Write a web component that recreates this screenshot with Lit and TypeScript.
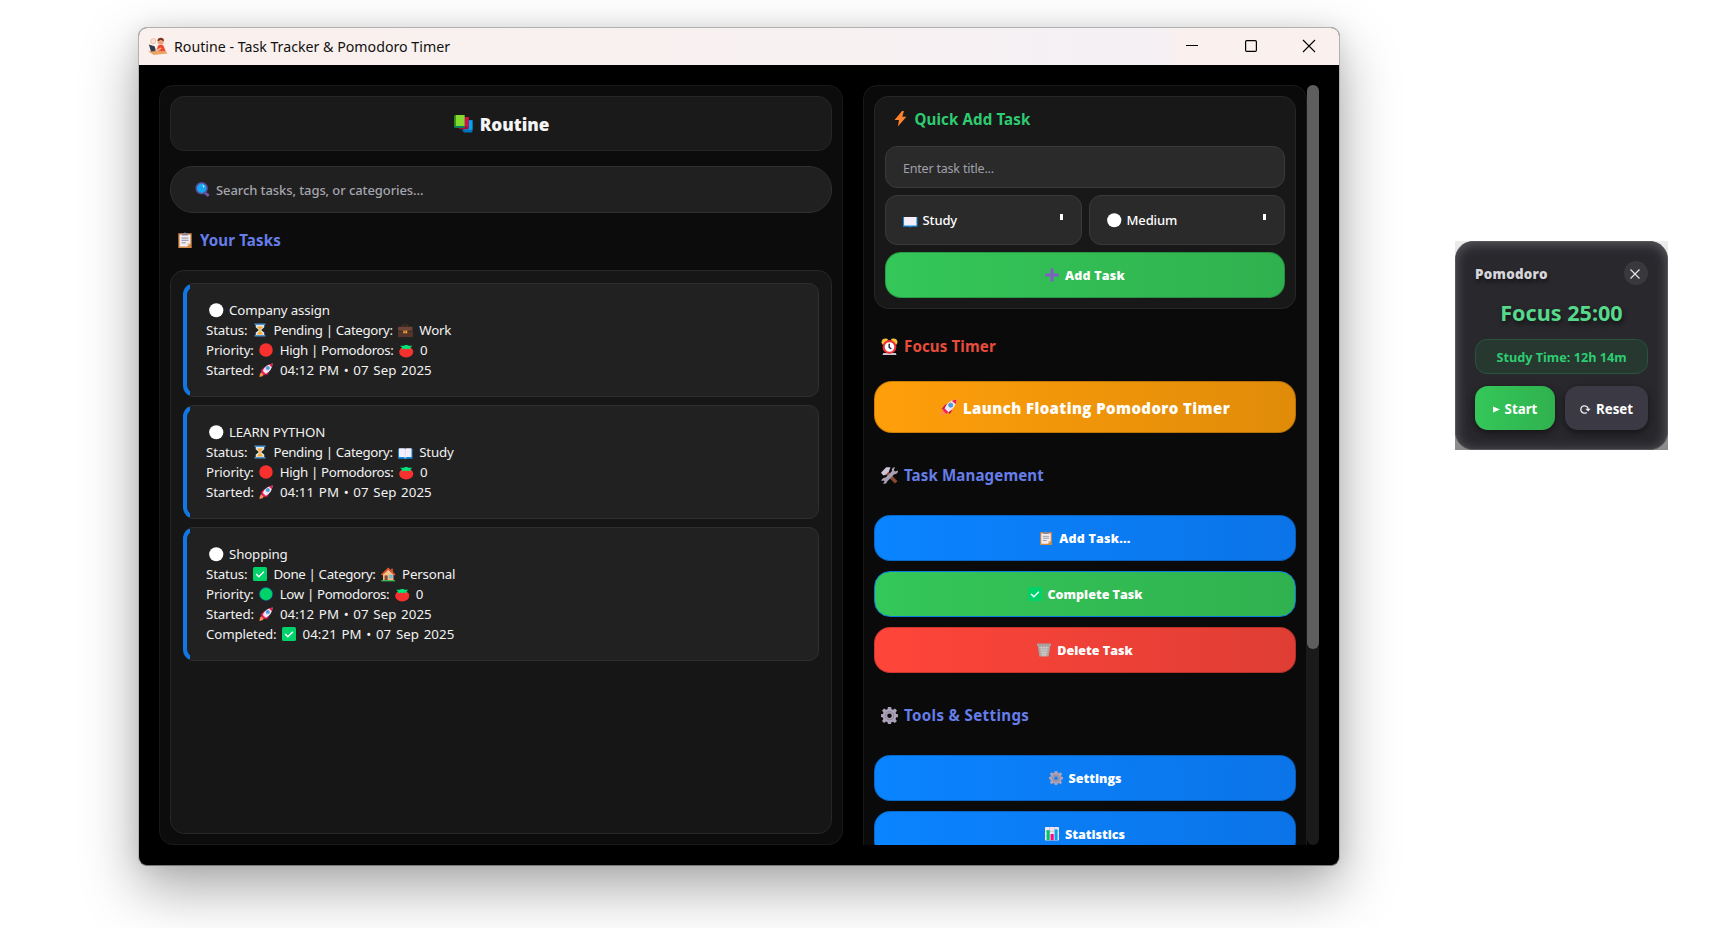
import { LitElement, html, css, svg, nothing } from "lit";
import { customElement, property } from "lit/decorators.js";

const icons: Record<string, unknown> = {
  app: svg`<circle cx="5" cy="4" r="2.4" fill="#fbe3d6" stroke="#e8b496" stroke-width=".8"/><circle cx="12" cy="4.2" r="3" fill="#e9a27b"/><path d="M9 3.6c0-4 6.200-4 6.200 0-2 .4-2-1-3-1S11 4 9 3.600z" fill="#7a2b1c"/><path d="M8 13l1.500-5q3-1.500 5 0L17 14H8z" fill="#ef4a2e"/><path d="M0 13.500h17l1.500 2.200-13 1.300z" fill="#eda363"/><path d="M.8 7l5.400 1.800 1.600 4.700-5 .2z" fill="#333b49"/><path d="M6 13l6-3 1 1-4 3z" fill="#f4b48d"/>`,
  books: svg`<path d="M9 5h8.500v10.500q0 1-1 1H9.500L8 15z" fill="#0072bc"/><path d="M10 5h7.500v9H10z" fill="#00a4ef"/><path d="M5 2h9v10.500q0 1-1 1H5.500L4 12z" fill="#a50f3c"/><path d="M6 2h8v9H6z" fill="#d40f4e"/><path d="M0 1.500Q0 0 1.500 0H10v12H1q-1 0-1-1z" fill="#2c8c10"/><path d="M1.800 0H10v10.500H1.800z" fill="#86d72f"/><path d="M.5 10.500H10V12H1z" fill="#00806a"/>`,
  search: svg`<path d="M11 10.500l6.500 4.500-2 3L9 12.500z" fill="#6b57a5"/><circle cx="8" cy="7.500" r="6.600" fill="#14a7f2" stroke="#5c4b93" stroke-width="1.800"/><path d="M8.500 3l3 2-1 1.500z" fill="#fff"/>`,
  clipboard: svg`<path d="M1.500 1.500h15v16.500h-15z" fill="#d28a44"/><path d="M3 3.200h12v9.500l-3.500 3.600H3z" fill="#f4eff7"/><path d="M11.500 16.300l.2-3.800H15z" fill="#f2c79d"/><path d="M5.500 3.900V1.300h1.800Q9-.3 10.700 1.300h1.800v2.600z" fill="#8d8794"/><path d="M5 6.800h8M5 9.300h8M5 12.200h5" stroke="#8d8794" stroke-width="1.100"/>`,
  white: svg`<circle cx="9" cy="9" r="8.800" fill="#fff"/>`,
  red: svg`<circle cx="9" cy="9" r="8.700" fill="#f8312f"/>`,
  green: svg`<circle cx="9" cy="9" r="8.400" fill="#00d26a" stroke="#0a52b5" stroke-width=".7"/>`,
  hourglass: svg`<path d="M3.500 2.500h11v3L10.500 9l4 3.500v3h-11v-3l4-3.500-4-3.500z" fill="#d9e8f7"/><path d="M5 4.500h8L9 9zM9 9l4 5.800H5z" fill="#ffa51f"/><path d="M8.300 7h1.400v6H8.300z" fill="#ffc53d"/><path d="M2 .5h14v2.200H2zM2 15.300h14v2.200H2z" fill="#4a92ce"/>`,
  briefcase: svg`<path d="M6 5V2.500h6V5" fill="none" stroke="#4b3028" stroke-width="1.400"/><rect x="0" y="4.500" width="18" height="13" rx="1" fill="#6d4534"/><path d="M0 10h18v7.500H0z" fill="#54352b"/><path d="M0 9.500l9 1.500 9-1.500" stroke="#382521" fill="none"/><path d="M6.500 9.500h5v3.200h-5z" fill="#f3a134"/><path d="M8 10.800h2" stroke="#70421c"/>`,
  tomato: svg`<ellipse cx="9" cy="11" rx="8.800" ry="6.900" fill="#f8312f"/><path d="M1.500 3.500H6L8 2.500h2l2 1h4.500L14 5.800l.5 2.200-3.200-1.300L9 7.800 6.800 6.700 3.700 8l.3-2.200z" fill="#00e57a"/>`,
  rocket: svg`<path d="M3 9Q5 5 9 5l-3 6-4.500-.5zM12.500 9q1 4-2.500 7l-2.500-4z" fill="#cb1750"/><path d="M4.500 10.500Q7.500 2 17.500 .5 17 9.500 8 14.500z" fill="#efe9f6"/><path d="M12.500 1.800L17.500.5 16.600 5.500z" fill="#ee1650"/><circle cx="11.300" cy="6.500" r="2.300" fill="#39a5ec" stroke="#77798c" stroke-width=".6"/><path d="M4.500 9.500l4.500 4.500-2.500 1.600L2.800 12z" fill="#f3205a"/><path d="M2.800 12l3.200 3.200-1.500 1.800-4 1L1.200 14z" fill="#ff8a4a"/>`,
  book: svg`<path d="M0 4.700h18V17h-7q-2 1.300-4 0H0z" fill="#1489d6"/><path d="M1.300 4h6.400L9 4.700 10.300 4h6.400v11h-6L9 15.800 7.300 15h-6z" fill="#f5effc"/><path d="M9 5v10.500" stroke="#e0d5ea" stroke-width="1"/>`,
  shutBook: svg`<path d="M0 5h18v12h-7q-2 1.300-4 0H0z" fill="#1489d6"/><path d="M1.300 5h15.400v10.500H1.300z" fill="#f5effc"/>`,
  check: svg`<rect x="0" y="0" width="18" height="18" rx="2" fill="#00d26a"/><path d="M4 9l3.500 3.500L14 6" fill="none" stroke="#fff" stroke-width="1.900"/>`,
  house: svg`<path d="M2.500 8h13v9h-13z" fill="#f6b878"/><path d="M12.500 2h2.500v5h-2.500z" fill="#b2543b"/><path d="M9 3L2.500 9.500h13z" fill="#f6c78b"/><path d="M9 .5L0 9.300l1.300 1.200L9 3.400l7.700 7.100L18 9.300z" fill="#ee5533"/><path d="M4.500 10.500h3.800V17H4.500z" fill="#84493c"/><path d="M10.300 9.500h4v4.500h-4z" fill="#66b9ee"/><path d="M.5 16.300h17v1.500H.5z" fill="#38c45d"/>`,
  bolt: svg`<path d="M10.500 0L1.800 10.500h5.200L5.600 18l10-11.200h-4.800L12.700 0z" fill="#ff822d"/>`,
  plus: svg`<path d="M7 .5h4V7h6.700v4H11v6.500H7V11H.3V7H7z" fill="#7f5fc4"/>`,
  alarm: svg`<path d="M.5 5q0-4.500 4.500-4.500 2 0 2.500 1.500L2 7.500zM17.500 5q0-4.500-4.500-4.500-2 0-2.500 1.500L16 7.500z" fill="#f7c23b"/><path d="M2.500 16h13l1 2h-15z" fill="#cfc8d6"/><circle cx="9" cy="9.500" r="6.200" fill="#fff" stroke="#ee3035" stroke-width="2.200"/><path d="M8.700 6v4l2.300 1.600" fill="none" stroke="#342b48" stroke-width="1.600"/>`,
  tools: svg`<path d="M4 7l3-3 10.500 11-2.800 2.500z" fill="#884a38"/><path d="M0 6L5.500.3H10L8.500 4.500 5 8.300 2.500 9z" fill="#cfc3d7"/><path d="M14.800.3l-1.300 3.200 1.500 1.300 3-1q0 4-4 4l-7.500 7.500q-.5 3.200-4.500 2.200l1.900-2-1-1.300-2.600.6Q1 11 5 11l6.500-6.500Q11 .3 14.800.3z" fill="#aaa0b5"/>`,
  trash: svg`<path d="M0 .8h18v2.700h-1L15 17.500H3L1 3.500H0z" fill="#aaa19f"/><path d="M3 6h12M3.300 9h11.400M4 12h10M4.500 15h9M5.500 4l2 13M9 4v13M12.500 4l-2 13" stroke="#d0cac8" stroke-width="1.100"/>`,
  gear: svg`<path d="M7.300 0h3.400l.5 2.300 1.500.6L14.800 1.500l2.100 2.200L15.400 6l.6 1.400 2 .3v3l-2 .4-.6 1.500 1.400 2.200-2.100 2.100-2.200-1.400-1.500.6-.4 1.900H7.400l-.5-1.900-1.500-.7-2.200 1.500-2.100-2.100 1.400-2.200-.6-1.500-1.900-.4v-3l2-.3.600-1.500L1.100 3.700l2.100-2.200 2.200 1.400 1.500-.6z" fill="#aca2b8"/><circle cx="9" cy="9.200" r="4.300" fill="none" stroke="#8a8097"/><circle cx="9" cy="9.200" r="2.400" class="hole"/>`,
  chart: svg`<rect width="18" height="17.500" rx="1" fill="#efe6f3"/><path d="M5.800 0v17M12 0v17M0 5.500h18M0 11.500h18" stroke="#b9abc6" stroke-width=".7"/><path d="M2 4h4v13H2z" fill="#00c865"/><path d="M7.200 9h4v8h-4z" fill="#f70a8d"/><path d="M12.500 3h3.700v14h-3.700z" fill="#00a6ed"/>`,
};

const icon = (name: string, size = 14) =>
  html`<svg class="ico" width=${size} height=${size} viewBox="0 0 18 18">${icons[name]}</svg>`;

const shared = css`
  * { box-sizing: border-box; }
  .ico { flex: none; display: block; overflow: visible; }
  .hole { fill: var(--hole, #0a0a0a); }
  .heavy { font-family: "Open Sans", "Noto Sans", sans-serif; font-weight: 800; }
`;

@customElement("task-card")
class TaskCard extends LitElement {
  @property({ attribute: false }) task: any;
  static styles = [shared, css`
    :host { display: block; }
    .card { position: relative; border: 1px solid #2f2f2f; border-radius: 10px; background: #212121; padding: 16px 22px; color: #f2f2f2; font-size: 13.300px; letter-spacing: -0.150px; }
    .card::before { content: ""; position: absolute; inset: -1px; border: 4px solid #1078e6; border-radius: 12px; clip-path: inset(2px calc(100% - 7px) 2px 0); }
    .row { display: flex; align-items: center; height: 20px; white-space: pre; }
    .row .ico { margin: 0 6.500px 0 5.500px; }
    .name .ico { margin: 0 6px 0 2.500px; }
    .mid { letter-spacing: -0.370px; }
    .date { letter-spacing: 0.060px; word-spacing: 1.100px; }
  `];
  render() {
    const t = this.task;
    return html`<div class="card">
      <div class="row name">${icon("white", 14.5)}<span>${t.name}</span></div>
      <div class="row"><span>Status:</span>${icon(t.status[0])}<span class="mid">${t.status[1]} | Category:</span>${icon(t.cat[0], 14.5)}<span>${t.cat[1]}</span></div>
      <div class="row"><span>Priority:</span>${icon(t.prio[0])}<span class="mid">${t.prio[1]} | Pomodoros:</span>${icon("tomato", 14.5)}<span>0</span></div>
      <div class="row"><span>Started:</span>${icon("rocket")}<span class="date">${t.started}</span></div>
      ${t.done ? html`<div class="row"><span>Completed:</span>${icon("check")}<span class="date">${t.done}</span></div>` : nothing}
    </div>`;
  }
}

@customElement("pomodoro-widget")
class PomodoroWidget extends LitElement {
  static styles = [shared, css`
    :host { display: block; width: 213px; height: 209px; background: linear-gradient(#ececec, #8a8a8a); }
    .box { height: 209px; border: 1px solid #55555a; border-radius: 18px; padding: 19px; background: #29282d; box-shadow: inset 0 2px 12px #5b5b60; display: flex; flex-direction: column; }
    .top { display: flex; justify-content: space-between; align-items: center; height: 24px; }
    .title { font-size: 13.400px; letter-spacing: 0.250px; color: #d6d6da; text-shadow: 1px 3px 4px #0008; padding-top: 1px; }
    .close { width: 24px; height: 24px; border-radius: 50%; background: #39383d; display: grid; place-items: center; padding: 2px 2px 0 0; }
    .time { height: 54px; display: grid; place-items: center; font-size: 21.600px; font-weight: 700; color: #57d98b; text-shadow: 1px 3px 5px #0009; padding-top: 0; white-space: nowrap; }
    .study { height: 35px; border: 1px solid #28543f; border-radius: 12px; background: #263830; display: grid; place-items: center; color: #2ecc71; font-size: 12.700px; font-weight: 700; padding-top: 1px; }
    .acts { display: grid; grid-template-columns: 80px 83px; gap: 10px; margin-top: 12px; }
    .btn { height: 44px; border-radius: 13px; display: flex; align-items: center; justify-content: center; gap: 5px; color: #fff; font-size: 13.300px; font-weight: 700; padding-top: 2px; box-shadow: 0 3px 8px #0008; }
    .start { background: linear-gradient(90deg, #34c759, #30b14f); }
    .reset { background: #3a3944; }
  `];
  render() {
    return html`<div class="box">
      <div class="top"><span class="title heavy">Pomodoro</span><span class="close"><svg class="ico" width="10" height="10" viewBox="0 0 10 10"><path d="M.5 .5l9 9M9.500 .5l-9 9" stroke="#e4e4e6" stroke-width="1.200"/></svg></span></div>
      <div class="time"><span>Focus 25:00</span></div>
      <div class="study"><span>Study Time: 12h 14m</span></div>
      <div class="acts">
        <div class="btn start"><svg class="ico" width="7" height="7" viewBox="0 0 7 7"><path d="M0 .5L7 3.500 0 6.500z" fill="#fff"/></svg><span>Start</span></div>
        <div class="btn reset"><svg class="ico" width="11" height="9" viewBox="0 0 11 9"><path d="M8.200 4.500A3.700 3.700 0 1 0 6.800 7.400M4.500 .8A3.700 3.700 0 0 1 8.200 4.500" fill="none" stroke="#eee" stroke-width="1.300"/><path d="M5.300 3.800h5.400L8.100 6.600z" fill="#eee"/></svg><span>Reset</span></div>
      </div>
    </div>`;
  }
}

const tasks = [
  { name: "Company assign", status: ["hourglass", "Pending"], cat: ["briefcase", "Work"], prio: ["red", "High"], started: "04:12 PM • 07 Sep 2025" },
  { name: "LEARN PYTHON", status: ["hourglass", "Pending"], cat: ["book", "Study"], prio: ["red", "High"], started: "04:11 PM • 07 Sep 2025" },
  { name: "Shopping", status: ["check", "Done"], cat: ["house", "Personal"], prio: ["green", "Low"], started: "04:12 PM • 07 Sep 2025", done: "04:21 PM • 07 Sep 2025" },
];

@customElement("app-root")
class AppRoot extends LitElement {
  static styles = [shared, css`
    :host { box-sizing: border-box; display: flex; align-items: flex-start; width: 1722px; height: 928px; overflow: hidden; background: #fff; font-family: "Noto Sans", "Open Sans", sans-serif; padding: 27px 0 0 138px; }
    .window { width: 1202px; height: 839px; border: 1px solid #b1b1b1; border-bottom-color: #777; border-radius: 9px; overflow: hidden; background: #000; flex: none; box-shadow: 0 22px 56px #00000058, 0 0 20px #00000014; }
    .bar { height: 37px; background: linear-gradient(90deg, #faf0ed, #f8f1f1 50%, #f4f0f4 85%, #faf0ed 87%); display: flex; align-items: center; padding: 0 24px 1px 9px; color: #111; }
    .bar .name { font-size: 14.200px; margin-left: 7px; flex: 1; }
    .ctl { display: flex; align-items: center; gap: 46.500px; }
    .body { height: 800px; padding: 20px; display: grid; grid-template-columns: 684px 456px; gap: 20px; }
    .left { border: 1px solid #191919; border-radius: 14px; background: #0c0c0c; padding: 10px; display: flex; flex-direction: column; height: 760px; }
    .hero { height: 55px; border: 1px solid #262626; border-radius: 14px; background: #1a1a1a; display: flex; align-items: center; justify-content: center; gap: 7px; color: #f5f5f7; font-size: 17.200px; padding: 1px 0 0 1px; }
    .search { height: 47px; margin-top: 15px; border: 1px solid #303030; border-radius: 23px; background: #202020; display: flex; align-items: center; gap: 6px; padding: 0 24px; color: #a5a5ae; font-size: 13px; font-weight: 500; letter-spacing: -0.090px; }
    .h { display: flex; align-items: center; gap: 6px; height: 24px; font-size: 15.100px; font-weight: 700; color: #667eea; padding-left: 7px; letter-spacing: 0.120px; }
    .left .h { margin-top: 15px; gap: 7px; }
    .list { flex: 1; margin-top: 18px; border: 1px solid #262626; border-radius: 14px; background: #161616; padding: 12px; display: flex; flex-direction: column; gap: 8px; }
    .right { display: flex; height: 760px; overflow: hidden; }
    .scroll { width: 444px; height: 790px; border: 1px solid #191919; border-radius: 14px; background: #0a0a0a; padding: 10px; flex: none; }
    .track { width: 12px; height: 760px; border-radius: 6px; background: #1a1a1a; }
    .thumb { height: 564px; border-radius: 6px; background: #5e5e5e; }
    .quick { height: 213px; border: 1px solid #262626; border-radius: 14px; background: #181818; padding: 10px; }
    .quick .h { color: #2ecc71; height: 24px; padding: 0 0 0 8px; gap: 6px; }
    .field { height: 42px; margin-top: 15px; border: 1px solid #3a3a3a; border-radius: 12px; background: #2a2a2a; display: flex; align-items: center; padding: 2px 17px 0; color: #a0a0aa; font-size: 12.500px; letter-spacing: -0.200px; }
    .pair { display: grid; grid-template-columns: 197px 196px; gap: 7px; margin: 7px 0; }
    .sel { height: 50px; border: 1px solid #3a3a3a; border-radius: 12px; background: #2a2a2a; display: flex; align-items: center; gap: 5px; padding: 0 17px; color: #fff; font-size: 13px; font-weight: 500; letter-spacing: -0.120px; }
    .sel span { flex: 1; }
    .tick { width: 3px; height: 6px; background: #fff; margin: -6px 1px 0 0; }
    .btn { height: 46px; border-radius: 16px; border: 1px solid #0003; display: flex; align-items: center; justify-content: center; gap: 6px; color: #fff; font-size: 12.500px; background-origin: border-box; background-image: linear-gradient(90deg, #0a84ff, #0b74e8); --hole: #1b80e8; white-space: nowrap; }
    .wide { letter-spacing: 0.200px; }
    .green { background-image: linear-gradient(90deg, #34c759, #30b14f); }
    .red { background-image: linear-gradient(90deg, #ff453a, #df3d34); }
    .orange { height: 52px; border-radius: 18px; font-size: 15px; letter-spacing: 0.400px; padding-top: 1px; background-image: linear-gradient(90deg, #ff9f0a, #e08b09); }
    .focus { border: 1px solid #0a7ae0; }
    .stack { display: grid; gap: 10px; }
    .f { color: #e74c3c; margin: 25px 0 23px; }
    .m { margin: 30px 0 28px; }
    .t { margin: 30px 0 28px; letter-spacing: 0.350px; }
    .float { margin: 214px 0 0 115px; flex: none; }
  `];
  render() {
    return html`
      <div class="window">
        <div class="bar">${icon("app", 19)}<span class="name">Routine - Task Tracker &amp; Pomodoro Timer</span>
          <div class="ctl">
            <svg class="ico" width="12" height="12" viewBox="0 0 12 12"><path d="M0 5.500h12" stroke="#000"/></svg>
            <svg class="ico" width="12" height="12" viewBox="0 0 12 12"><rect x=".6" y=".6" width="10.800" height="10.800" rx="1.200" fill="none" stroke="#000" stroke-width="1.200"/></svg>
            <svg class="ico" width="12" height="12" viewBox="0 0 12 12"><path d="M0 0l12 12M12 0L0 12" stroke="#000" stroke-width="1.100"/></svg>
          </div>
        </div>
        <div class="body">
          <div class="left">
            <div class="hero heavy">${icon("books", 19)}<span>Routine</span></div>
            <div class="search">${icon("search", 15)}<span>Search tasks, tags, or categories...</span></div>
            <div class="h">${icon("clipboard", 16)}<span>Your Tasks</span></div>
            <div class="list">${tasks.map((t) => html`<task-card .task=${t}></task-card>`)}</div>
          </div>
          <div class="right">
            <div class="scroll">
              <div class="quick">
                <div class="h">${icon("bolt", 15.5)}<span>Quick Add Task</span></div>
                <div class="field">Enter task title...</div>
                <div class="pair">
                  <div class="sel">${icon("shutBook", 14.5)}<span>Study</span><i class="tick"></i></div>
                  <div class="sel">${icon("white", 14.5)}<span>Medium</span><i class="tick"></i></div>
                </div>
                <div class="btn heavy green wide">${icon("plus")}<span>Add Task</span></div>
              </div>
              <div class="h f">${icon("alarm", 17)}<span>Focus Timer</span></div>
              <div class="btn heavy orange">${icon("rocket", 17)}<span>Launch Floating Pomodoro Timer</span></div>
              <div class="h m">${icon("tools", 17)}<span>Task Management</span></div>
              <div class="stack">
                <div class="btn heavy wide">${icon("clipboard")}<span>Add Task...</span></div>
                <div class="btn heavy green focus">${icon("check")}<span>Complete Task</span></div>
                <div class="btn heavy red">${icon("trash")}<span>Delete Task</span></div>
              </div>
              <div class="h t">${icon("gear", 17)}<span>Tools &amp; Settings</span></div>
              <div class="stack">
                <div class="btn heavy">${icon("gear")}<span>Settings</span></div>
                <div class="btn heavy">${icon("chart")}<span>Statistics</span></div>
              </div>
            </div>
            <div class="track"><div class="thumb"></div></div>
          </div>
        </div>
      </div>
      <pomodoro-widget class="float"></pomodoro-widget>`;
  }
}
